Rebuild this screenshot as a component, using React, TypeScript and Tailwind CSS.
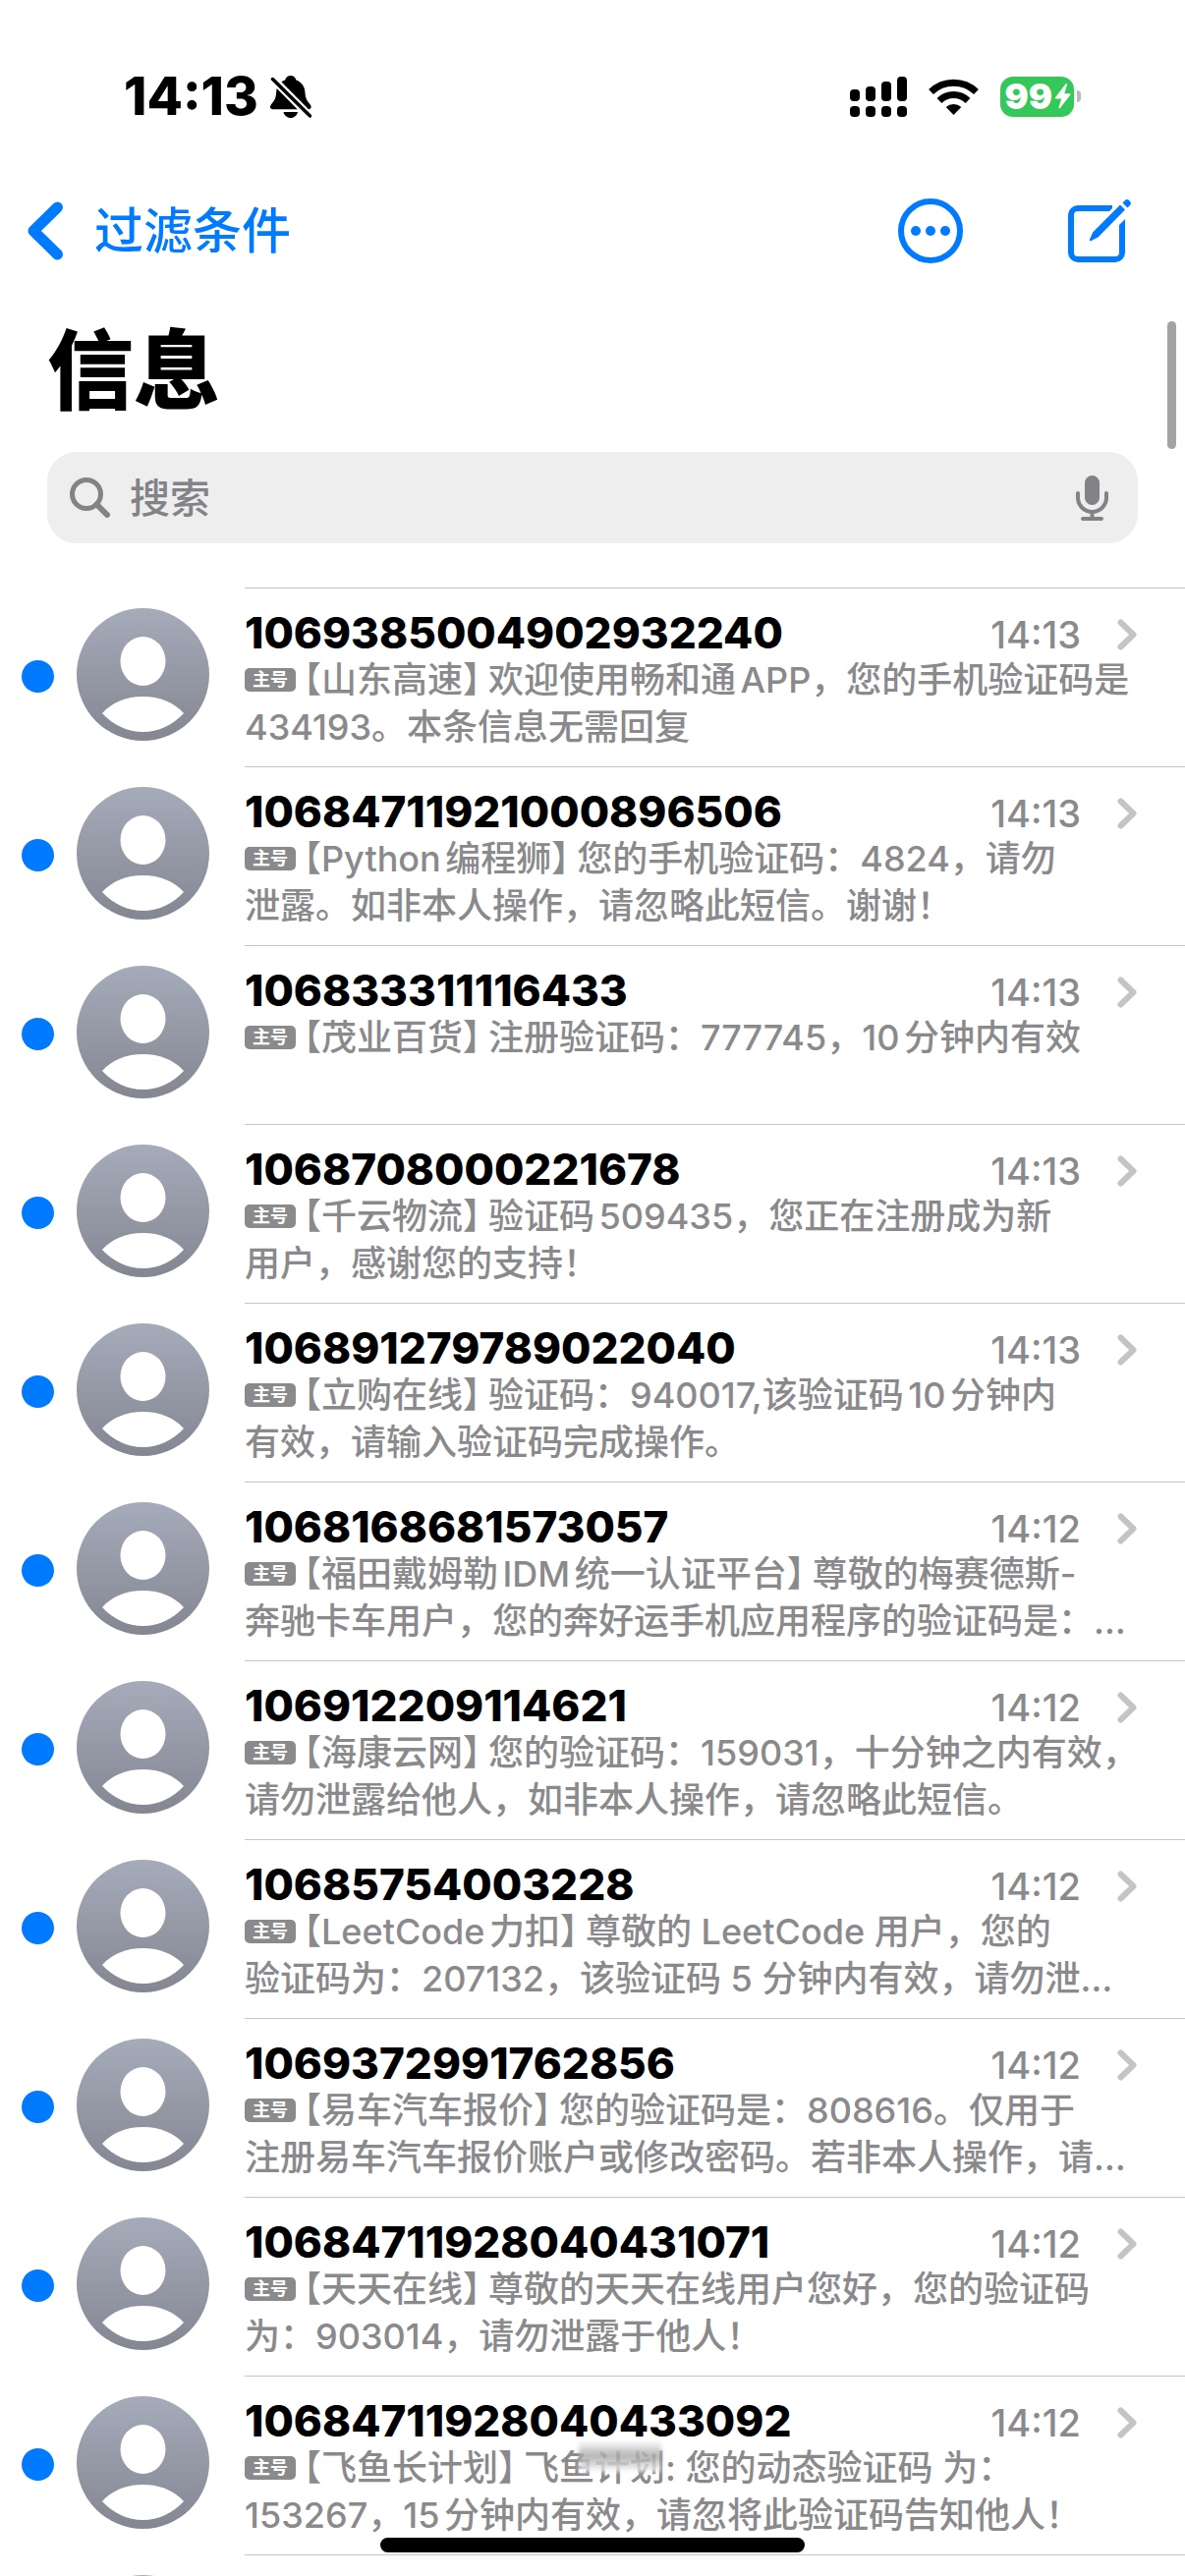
type Conversation = {
  id: string
  time: string
  sender: string
  lines: string[]
  smudged?: boolean
}

const conversations: Conversation[] = [
  { id: '1069385004902932240', time: '14:13', sender: '山东高速', lines: ['欢迎使用畅和通APP，您的手机验证码是', '434193。本条信息无需回复'] },
  { id: '10684711921000896506', time: '14:13', sender: 'Python编程狮', lines: ['您的手机验证码：4824，请勿', '泄露。如非本人操作，请忽略此短信。谢谢！'] },
  { id: '106833311116433', time: '14:13', sender: '茂业百货', lines: ['注册验证码：777745，10分钟内有效'] },
  { id: '1068708000221678', time: '14:13', sender: '千云物流', lines: ['验证码509435，您正在注册成为新', '用户，感谢您的支持！'] },
  { id: '106891279789022040', time: '14:13', sender: '立购在线', lines: ['验证码：940017,该验证码10分钟内', '有效，请输入验证码完成操作。'] },
  { id: '1068168681573057', time: '14:12', sender: '福田戴姆勒IDM统一认证平台', lines: ['尊敬的梅赛德斯-', '奔驰卡车用户，您的奔好运手机应用程序的验证码是：…'] },
  { id: '106912209114621', time: '14:12', sender: '海康云网', lines: ['您的验证码：159031，十分钟之内有效，', '请勿泄露给他人，如非本人操作，请忽略此短信。'] },
  { id: '10685754003228', time: '14:12', sender: 'LeetCode力扣', lines: ['尊敬的 LeetCode 用户，您的', '验证码为：207132，该验证码 5 分钟内有效，请勿泄…'] },
  { id: '1069372991762856', time: '14:12', sender: '易车汽车报价', lines: ['您的验证码是：808616。仅用于', '注册易车汽车报价账户或修改密码。若非本人操作，请…'] },
  { id: '10684711928040431071', time: '14:12', sender: '天天在线', lines: ['尊敬的天天在线用户您好，您的验证码', '为：903014，请勿泄露于他人！'] },
  { id: '10684711928040433092', time: '14:12', sender: '飞鱼长计划', smudged: true, lines: ['飞鱼计划: 您的动态验证码 为：', '153267，15分钟内有效，请忽将此验证码告知他人！'] },
  { id: '', time: '', sender: '', lines: [] },
]

const BellOff = () => (
  <svg width="42" height="43" viewBox="0 0 42 43" aria-hidden="true">
    <path d="M20.8 0c3 0 5 2 5.600 4.500 5.600 2 8.600 6.500 9 12 .4 6 1.600 8.500 4.600 12 1.200 1.500 1.800 2.600 1.600 3.700-.3 1.400-1.500 2-3 2H3.200C1.600 34.200.3 33.600 0 32.200c-.2-1.100.5-2.300 1.600-3.700 3-3.500 4.300-6 4.600-12 .3-5.500 3.400-10 9-12C15.800 2 17.800 0 20.800 0z" />
    <path d="M13.500 37h14.500c-.8 3.500-3.600 6-7.200 6s-6.500-2.500-7.300-6z" />
    <path d="M-2 -1.500 44 45" stroke="#fff" strokeWidth="8" />
    <path d="M2.500 3.500 40.500 41" stroke="#000" strokeWidth="3.500" strokeLinecap="round" />
  </svg>
)

const Signal = () => (
  <svg width="58" height="41" viewBox="0 0 58 41" aria-hidden="true">
    <rect x="0" y="13" width="10" height="12" rx="4" />
    <rect x="16" y="10" width="10" height="15" rx="4" />
    <rect x="32" y="5" width="10" height="20" rx="4" />
    <rect x="48" y="0" width="10" height="25" rx="4" />
    <rect x="0" y="30" width="10" height="11" rx="4" />
    <rect x="16" y="30" width="10" height="11" rx="4" />
    <rect x="32" y="30" width="10" height="11" rx="4" />
    <rect x="48" y="30" width="10" height="11" rx="4" />
  </svg>
)

const Wifi = () => (
  <svg width="51" height="37" viewBox="0 0 51 37" aria-hidden="true">
    <g fill="none" stroke="#000" strokeWidth="7">
      <path d="M2.500 13.500a33 33 0 0 1 46 0" />
      <path d="M11 22.500a20.500 20.500 0 0 1 29 0" />
    </g>
    <path d="M25.500 37l-7.800-8a11.500 11.500 0 0 1 15.600 0z" />
  </svg>
)

const Bolt = () => (
  <svg width="17" height="26" viewBox="0 0 17 26" fill="#fff" aria-hidden="true">
    <path d="M11.500.5 1 14.200c-.5.7-.2 1.300.6 1.300h5.600L4.600 24c-.4 1.300.7 1.900 1.500.8L16.400 11.500c.5-.7.2-1.300-.6-1.300h-5.500l2.600-8.700c.4-1.300-.6-1.900-1.400-1z" />
  </svg>
)

const StatusBar = () => (
  <div className="flex h-[196px] shrink-0 items-center justify-between pr-[106px] pl-[126px]">
    <div className="flex items-center gap-3">
      <span className="text-[53px] leading-none font-extrabold">14:13</span>
      <BellOff />
    </div>
    <div className="flex items-center gap-[22px]">
      <Signal />
      <Wifi />
      <div className="flex items-center gap-[3px]">
        <div className="flex h-[41px] items-center gap-[2px] rounded-[13px] bg-[#34c759] pr-[3px] pl-1">
          <span className="text-[36px] leading-none font-black text-white">99</span>
          <Bolt />
        </div>
        <div className="h-3 w-1 rounded-r-full bg-[#b9b9bb]" />
      </div>
    </div>
  </div>
)

const NavBar = () => (
  <nav className="flex h-[78px] shrink-0 items-center justify-between pr-[54px] pl-7">
    <a href="#filters" className="flex items-center gap-8 text-[50px] leading-none font-medium text-[#007aff]">
      <svg width="36" height="60" viewBox="0 0 36 60" fill="none" stroke="currentColor" strokeWidth="11" strokeLinecap="round" strokeLinejoin="round" aria-hidden="true">
        <path d="M30.500 6 6 30l24.500 24" />
      </svg>
      过滤条件
    </a>
    <div className="flex items-center gap-[106px] text-[#007aff]">
      <button aria-label="更多">
        <svg width="66" height="66" viewBox="0 0 66 66" fill="currentColor" aria-hidden="true">
          <circle cx="33" cy="33" r="30" fill="none" stroke="currentColor" strokeWidth="6" />
          <circle cx="18" cy="33" r="5" />
          <circle cx="33" cy="33" r="5" />
          <circle cx="48" cy="33" r="5" />
        </svg>
      </button>
      <button aria-label="新信息">
        <svg width="66" height="66" viewBox="0 0 66 66" aria-hidden="true">
          <path d="M46 10H11a7 7 0 0 0-7 7v38a7 7 0 0 0 7 7h38a7 7 0 0 0 7-7V18" fill="none" stroke="currentColor" strokeWidth="6" />
          <path d="M39 17 50 6l12 12-11 11z" fill="#fff" />
          <path d="M54 6.500 59 11.500 31.500 39.500 24.500 43c-1.200.6-2-.3-1.500-1.500l3.300-7.200z" fill="currentColor" />
          <path d="M56.500 4.500l2.200-2.300a3.200 3.200 0 0 1 4.600 0l.4.400a3.200 3.200 0 0 1 0 4.600L61.500 9.400z" fill="currentColor" />
        </svg>
      </button>
    </div>
  </nav>
)

const SearchBar = () => (
  <div className="mx-12 mb-[45px] flex h-[93px] shrink-0 items-center rounded-[30px] bg-[#eeeeef] pr-[30px] pl-[23px] text-[#838387]">
    <svg width="41" height="41" viewBox="0 0 41 41" fill="none" stroke="currentColor" strokeWidth="5" strokeLinecap="round" aria-hidden="true">
      <circle cx="17" cy="17" r="14.500" />
      <path d="M27.500 27.500 38 38" strokeWidth="6" />
    </svg>
    <input
      type="search"
      aria-label="搜索"
      placeholder="搜索"
      className="ml-5 min-w-0 flex-1 bg-transparent text-[41px] leading-none font-medium outline-none placeholder:text-[#838387]"
    />
    <button aria-label="听写">
      <svg width="33" height="46" viewBox="0 0 33 46" fill="none" stroke="currentColor" strokeWidth="4" strokeLinecap="round" aria-hidden="true">
        <rect x="9" y="0" width="15" height="30" rx="7.500" fill="currentColor" stroke="none" />
        <path d="M2 18v4.500a14.500 14.500 0 0 0 29 0V18M16.500 37v6M7 44h19" />
      </svg>
    </button>
  </div>
)

const Avatar = () => (
  <svg width="135" height="135" viewBox="0 0 135 135" className="shrink-0" aria-hidden="true">
    <defs>
      <linearGradient id="avatar" x1="0" y1="0" x2="0" y2="1">
        <stop offset="0" stopColor="#a6abba" />
        <stop offset="1" stopColor="#848792" />
      </linearGradient>
    </defs>
    <circle cx="67.500" cy="67.500" r="67.500" fill="url(#avatar)" />
    <ellipse cx="67.500" cy="54" rx="23" ry="25" fill="#fff" />
    <path d="M26 107C36 96 50 90 67.500 90S99 96 109 107C98 119 83 126 67.500 126S37 119 26 107z" fill="#fff" />
  </svg>
)

const Row = ({ id, time, sender, lines, smudged }: Conversation) => (
  <li>
    <a href={`#${id}`} className="flex h-[182px]">
      <div className="flex shrink-0 items-start pt-[21px] pr-9 pl-[22px]">
        <span className="mt-[53px] mr-[23px] h-[33px] w-[33px] rounded-full bg-[#007aff]" />
        <Avatar />
      </div>
      <div className="min-w-0 flex-1 border-t border-[#c6c6c8] pt-[21px] pr-[49px] leading-[48px]">
        <div className="flex h-12 items-center">
          <h2 className="flex-1 text-[44px] font-extrabold">{id}</h2>
          <div className="flex items-center gap-[37px] pt-1">
            <time className="text-[38px] font-medium text-[#8a8a8d]">{time}</time>
            <svg width="20" height="32" viewBox="0 0 20 32" fill="none" stroke="#c4c4c7" strokeWidth="6" strokeLinecap="round" strokeLinejoin="round" aria-hidden="true">
              <path d="M3.500 3.500 16.500 16l-13 12.500" />
            </svg>
          </div>
        </div>
        {lines.length > 0 && (
          <p className="text-[36px] font-medium whitespace-nowrap text-[#8a8a8d] [text-autospace:normal]">
            <span className="relative block h-12">
              <span className="mr-2 inline-flex h-6 items-center rounded-[5px] bg-[#8a8a8d] px-2 align-[7px] text-[18px] leading-none font-bold text-white">
                主号
              </span>
              <span className="mr-2 [font-feature-settings:'halt']">【{sender}】</span>
              {lines[0]}
              {smudged && (
                <span className="absolute -top-1 left-[340px] h-8 w-[84px] bg-linear-to-b from-white via-neutral-400/80 to-white/80 blur-[2px]" />
              )}
            </span>
            {lines[1]}
          </p>
        )}
      </div>
    </a>
  </li>
)

export default function App() {
  return (
    <div className="relative flex h-screen flex-col overflow-hidden bg-white font-['Inter','Noto_Sans_CJK_SC',sans-serif] text-black">
      <StatusBar />
      <NavBar />
      <h1 className="h-[186px] shrink-0 pt-5 pl-12 text-[88px] leading-[166px] font-black">信息</h1>
      <SearchBar />
      <ul className="min-h-0 flex-1 overflow-hidden">
        {conversations.map((conversation, index) => (
          <Row key={index} {...conversation} />
        ))}
      </ul>
      <div className="absolute top-[327px] right-[9px] h-[130px] w-[9px] rounded-full bg-[#a3a3a3]" />
      <div className="absolute bottom-6 left-1/2 h-[15px] w-[432px] -translate-x-1/2 rounded-full bg-black" />
    </div>
  )
}
